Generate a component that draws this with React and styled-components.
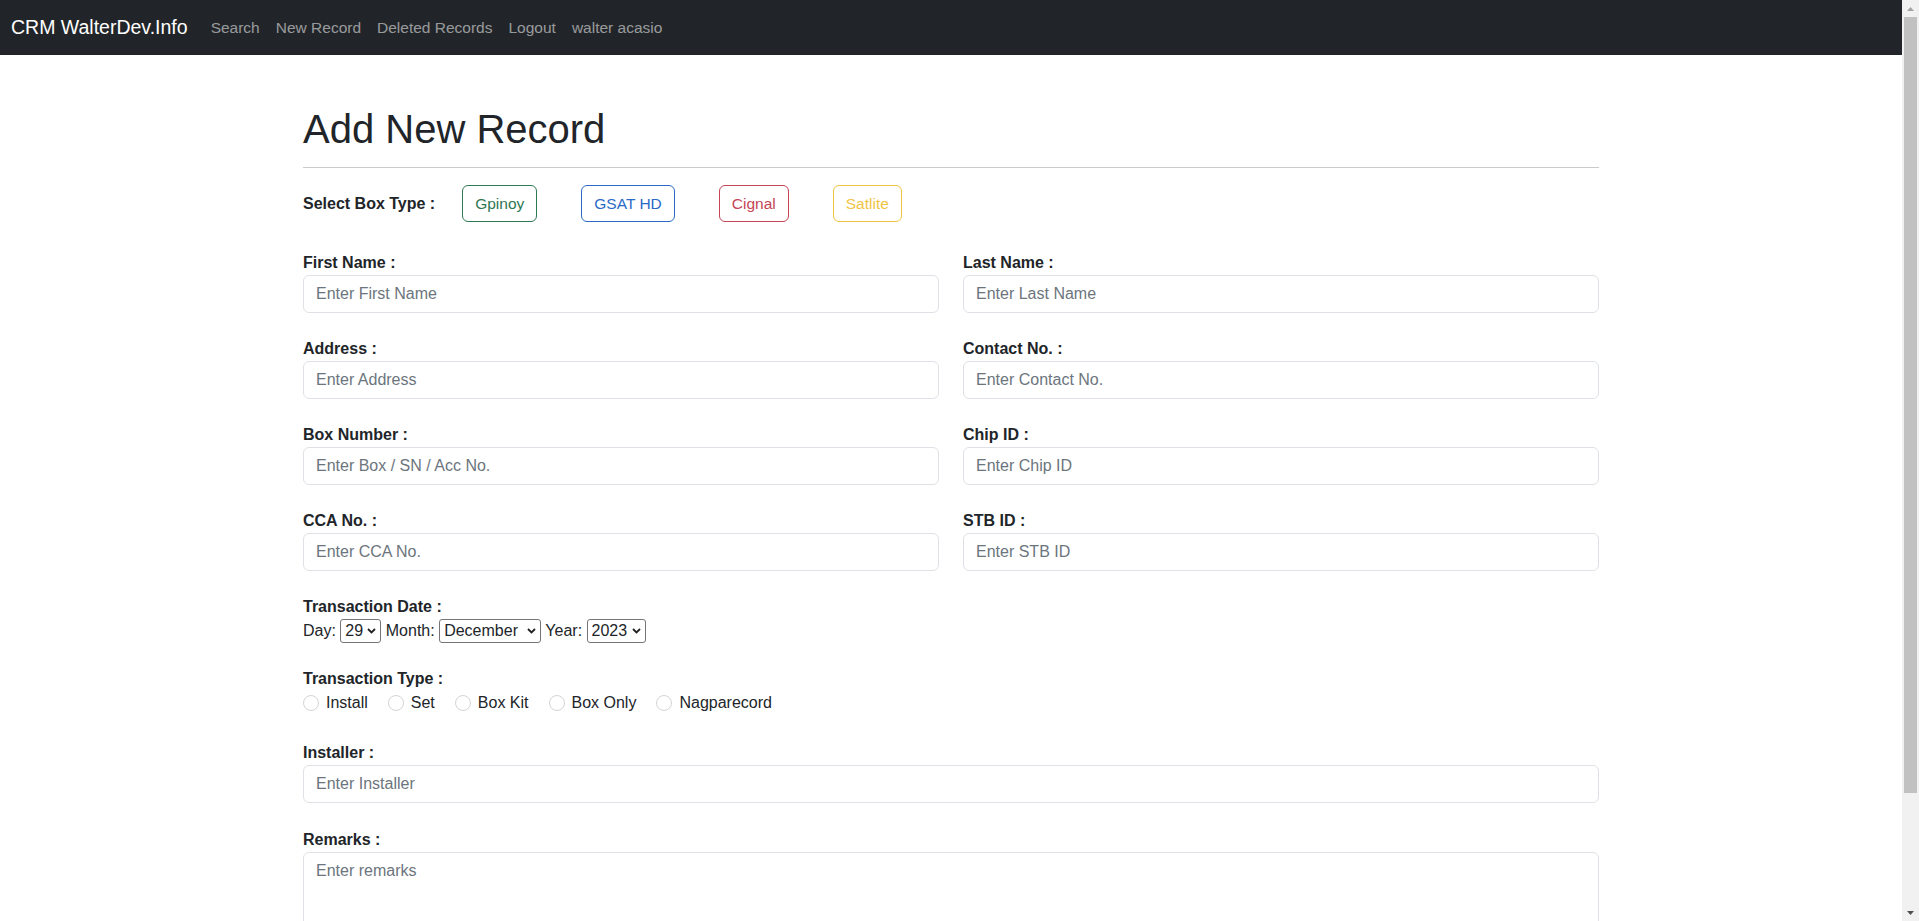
import React from 'react';
import styled, { createGlobalStyle } from 'styled-components';

const GlobalStyle = createGlobalStyle`
    body {
        margin: 0;
        font-family: "Segoe UI", "Liberation Sans", Arial, sans-serif;
        font-size: 16px;
        line-height: 1.5;
        color: #212529;
        background: #fff;
    }
    *, *::before, *::after {
        box-sizing: border-box;
    }
`;

const Shell = styled.div`
    display: flex;
    align-items: flex-start;
`;

const Page = styled.div`
    flex: 1;
    min-width: 0;
`;

// fake browser scrollbar, the reference shows the classic windows one
const ScrollTrack = styled.div`
    position: sticky;
    top: 0;
    flex: 0 0 17px;
    height: 100vh;
    display: flex;
    flex-direction: column;
    align-items: center;
    background: #f1f1f1;
`;

const ScrollArrow = styled.div`
    height: 17px;
    width: 17px;
    display: flex;
    align-items: center;
    justify-content: center;
`;

const ScrollThumb = styled.div`
    width: 13px;
    height: 776px;
    background: #c1c1c1;
`;

const ScrollSpacer = styled.div`
    flex: 1;
`;

const Navbar = styled.nav`
    display: flex;
    align-items: center;
    height: 55px;
    padding: 0 11px;
    background-color: #212529;
`;

const Brand = styled.a`
    font-size: 19.5px;
    color: #fff;
    text-decoration: none;
    margin-right: 15px;
`;

const NavLink = styled.a`
    font-size: 15.5px;
    color: rgba(255, 255, 255, 0.55);
    text-decoration: none;
    padding: 0 8px;
`;

const Container = styled.div`
    max-width: 1320px;
    margin: 0 auto;
    padding: 0 12px 56px;
`;

const Title = styled.h1`
    margin: 50px 0 0;
    font-size: 40px;
    font-weight: 500;
    line-height: 1.2;
`;

const Divider = styled.hr`
    margin: 14px 0 0;
    border: 0;
    border-top: 1px solid #c9cacb;
`;

const BoxTypeRow = styled.div`
    display: flex;
    align-items: center;
    margin-top: 17px;
`;

const BoxTypeLabel = styled.span`
    font-weight: 700;
    font-size: 16px;
    margin-right: 27px;
`;

const BoxButton = styled.button`
    font-family: inherit;
    font-size: 15.5px;
    line-height: 1.5;
    padding: 6px 12px;
    margin-right: 44px;
    background: transparent;
    border: 1px solid ${(p) => p.$color};
    color: ${(p) => p.$color};
    border-radius: 6px;
    cursor: pointer;
`;

const Form = styled.form`
    margin-top: 29px;
`;

const Grid = styled.div`
    display: grid;
    grid-template-columns: 1fr 1fr;
    column-gap: 24px;
`;

const Field = styled.div`
    margin-bottom: ${(p) => p.$mb || 24}px;
`;

const Label = styled.label`
    display: block;
    font-weight: 700;
    font-size: 16px;
    line-height: 24px;
`;

const Input = styled.input`
    display: block;
    width: 100%;
    height: 38px;
    padding: 6px 12px;
    font-family: inherit;
    font-size: 16px;
    color: #212529;
    border: 1px solid #dee2e6;
    border-radius: 6px;
    outline: none;

    &::placeholder {
        color: #6c757d;
    }
`;

const TextArea = styled.textarea`
    display: block;
    width: 100%;
    padding: 6px 12px;
    font-family: inherit;
    font-size: 16px;
    line-height: 1.5;
    color: #212529;
    border: 1px solid #dee2e6;
    border-radius: 6px;
    resize: vertical;
    outline: none;

    &::placeholder {
        color: #6c757d;
    }
`;

const DateLine = styled.div`
    line-height: 24px;
`;

const SelectWrap = styled.span`
    position: relative;
    display: inline-block;
    vertical-align: top;
`;

const Select = styled.select`
    appearance: none;
    font-family: inherit;
    font-size: 16px;
    line-height: 22px;
    height: 24px;
    padding: 0 17px 0 4px;
    color: #212529;
    background: #fff;
    border: 1px solid #767676;
    border-radius: 3px;
    outline: none;
`;

const Chevron = styled.svg`
    position: absolute;
    right: 5px;
    top: 9px;
    pointer-events: none;
`;

const RadioRow = styled.div`
    display: flex;
    align-items: center;
    height: 24px;
    margin-bottom: 2px;
`;

const RadioItem = styled.label`
    display: inline-flex;
    align-items: center;
    margin-right: 20px;
    font-size: 16px;
`;

const Radio = styled.input`
    appearance: none;
    width: 16px;
    height: 16px;
    margin: 0 7px 0 0;
    border: 1px solid #d3d4d5;
    border-radius: 50%;
    background: #fff;
`;

const SubmitButton = styled.button`
    font-family: inherit;
    font-size: 16px;
    padding: 6px 12px;
    color: #fff;
    background: #0d6efd;
    border: 1px solid #0d6efd;
    border-radius: 6px;
`;

const boxTypes = [
    { name: 'Gpinoy', color: '#2e7852' },
    { name: 'GSAT HD', color: '#2a6ac6' },
    { name: 'Cignal', color: '#c54556' },
    { name: 'Satlite', color: '#f1c444' },
];

const fields = [
    ['First Name :', 'Enter First Name'],
    ['Last Name :', 'Enter Last Name'],
    ['Address :', 'Enter Address'],
    ['Contact No. :', 'Enter Contact No.'],
    ['Box Number :', 'Enter Box / SN / Acc No.'],
    ['Chip ID :', 'Enter Chip ID'],
    ['CCA No. :', 'Enter CCA No.'],
    ['STB ID :', 'Enter STB ID'],
];

const months = [
    'January', 'February', 'March', 'April', 'May', 'June',
    'July', 'August', 'September', 'October', 'November', 'December',
];

const transactionTypes = ['Install', 'Set', 'Box Kit', 'Box Only', 'Nagparecord'];

const days = Array.from({ length: 31 }, (_, i) => String(i + 1));
const years = Array.from({ length: 10 }, (_, i) => String(2018 + i));

const DateSelect = ({ value, options }) => (
    <SelectWrap>
        <Select defaultValue={value}>
            {options.map((o) => (
                <option key={o} value={o}>{o}</option>
            ))}
        </Select>
        <Chevron width="9" height="6" viewBox="0 0 9 6">
            <path d="M1 1l3.5 3.5L8 1" fill="none" stroke="#222" strokeWidth="1.8" />
        </Chevron>
    </SelectWrap>
);

const App = () => {
    return (
        <Shell>
            <GlobalStyle />
            <Page>
                <Navbar>
                    <Brand href="#">CRM WalterDev.Info</Brand>
                    <NavLink href="#">Search</NavLink>
                    <NavLink href="#">New Record</NavLink>
                    <NavLink href="#">Deleted Records</NavLink>
                    <NavLink href="#">Logout</NavLink>
                    <NavLink href="#">walter acasio</NavLink>
                </Navbar>

                <Container>
                    <Title>Add New Record</Title>
                    <Divider />

                    <BoxTypeRow>
                        <BoxTypeLabel>Select Box Type :</BoxTypeLabel>
                        {boxTypes.map((b) => (
                            <BoxButton key={b.name} type="button" $color={b.color}>
                                {b.name}
                            </BoxButton>
                        ))}
                    </BoxTypeRow>

                    <Form onSubmit={(e) => e.preventDefault()}>
                        <Grid>
                            {fields.map(([label, placeholder]) => (
                                <Field key={label}>
                                    <Label>{label}</Label>
                                    <Input type="text" placeholder={placeholder} />
                                </Field>
                            ))}
                        </Grid>

                        <Field>
                            <Label>Transaction Date :</Label>
                            <DateLine>
                                Day: <DateSelect value="29" options={days} /> Month:{' '}
                                <DateSelect value="December" options={months} /> Year:{' '}
                                <DateSelect value="2023" options={years} />
                            </DateLine>
                        </Field>

                        <Field $mb={26}>
                            <Label>Transaction Type :</Label>
                            <RadioRow>
                                {transactionTypes.map((t) => (
                                    <RadioItem key={t}>
                                        <Radio type="radio" name="transactionType" value={t} />
                                        {t}
                                    </RadioItem>
                                ))}
                            </RadioRow>
                        </Field>

                        <Field $mb={25}>
                            <Label>Installer :</Label>
                            <Input type="text" placeholder="Enter Installer" />
                        </Field>

                        <Field>
                            <Label>Remarks :</Label>
                            <TextArea rows={3} placeholder="Enter remarks" />
                        </Field>

                        <SubmitButton type="submit">Submit</SubmitButton>
                    </Form>
                </Container>
            </Page>

            <ScrollTrack>
                <ScrollArrow>
                    <svg width="7" height="4" viewBox="0 0 7 4">
                        <path d="M0 4L3.5 0 7 4z" fill="#a3a3a3" />
                    </svg>
                </ScrollArrow>
                <ScrollThumb />
                <ScrollSpacer />
                <ScrollArrow>
                    <svg width="7" height="4" viewBox="0 0 7 4">
                        <path d="M0 0h7L3.5 4z" fill="#505050" />
                    </svg>
                </ScrollArrow>
            </ScrollTrack>
        </Shell>
    );
};

export default App;
